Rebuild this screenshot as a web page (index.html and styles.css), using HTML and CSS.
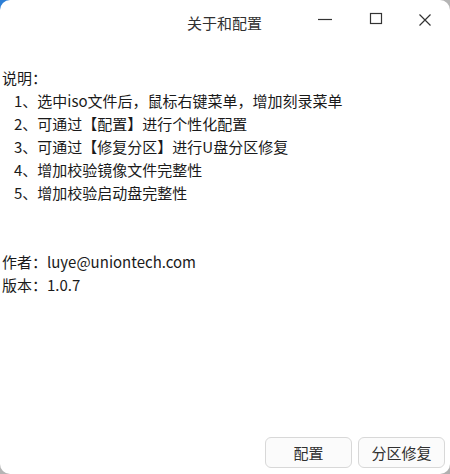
FILE: index.html
```html
<!DOCTYPE html>
<html lang="zh-CN">
<head>
<meta charset="utf-8">
<title>关于和配置</title>
<link rel="stylesheet" href="styles.css">
</head>
<body>
<div class="window">
  <div class="titlebar">
    <div class="title">关于和配置</div>
    <div class="controls">
      <svg class="ctl ctl-min" width="16" height="16" viewBox="0 0 16 16"><path d="M1 8.5H15" stroke="#333" stroke-width="1.2"/></svg>
      <svg class="ctl ctl-max" width="16" height="16" viewBox="0 0 16 16"><rect x="2.5" y="2.5" width="11" height="10" fill="none" stroke="#333" stroke-width="1.2"/></svg>
      <svg class="ctl ctl-close" width="16" height="16" viewBox="0 0 16 16"><path d="M2.5 2.5L13.5 13.5M13.5 2.5L2.5 13.5" stroke="#333" stroke-width="1.2"/></svg>
    </div>
  </div>
  <div class="content">
    <div class="line">说明：</div>
    <div class="line item">1、选中iso文件后，鼠标右键菜单，增加刻录菜单</div>
    <div class="line item">2、可通过【配置】进行个性化配置</div>
    <div class="line item">3、可通过【修复分区】进行U盘分区修复</div>
    <div class="line item">4、增加校验镜像文件完整性</div>
    <div class="line item">5、增加校验启动盘完整性</div>
    <div class="line blank"></div>
    <div class="line blank"></div>
    <div class="line">作者：luye@uniontech.com</div>
    <div class="line">版本：1.0.7</div>
  </div>
  <div class="footer">
    <button class="btn">配置</button>
    <button class="btn">分区修复</button>
  </div>
</div>
</body>
</html>
```
FILE: styles.css
```css
html, body {
  margin: 0;
  padding: 0;
  width: 450px;
  height: 474px;
  overflow: hidden;
}
body {
  background: linear-gradient(135deg, #2d7fd6 0, #2d7fd6 3%, #b8b8b8 10%, #b0b0b0 100%);
  font-family: "Noto Sans CJK SC", "Noto Sans", sans-serif;
}
.window {
  width: 450px;
  height: 474px;
  background: #ffffff;
  border-radius: 10px;
  display: flex;
  flex-direction: column;
  box-sizing: border-box;
}
.titlebar {
  height: 44px;
  position: relative;
  display: flex;
  align-items: center;
  justify-content: center;
  flex: none;
}
.title {
  font-size: 15px;
  color: #303030;
  margin-left: -1px;
}
.controls {
  position: absolute;
  top: 0;
  right: 0;
  height: 40px;
  display: flex;
  align-items: center;
}
.ctl { display: block; }
.ctl-min { margin-right: 35px; margin-top: -3px; }
.ctl-max { margin-right: 33px; margin-top: -3px; }
.ctl-close { margin-right: 17px; margin-top: -1px; }
.content {
  padding: 22px 0 0 2px;
  font-size: 15px;
  line-height: 23px;
  color: #1a1a1a;
  flex: 1;
}
.line { height: 23px; white-space: nowrap; }
.item { padding-left: 12px; }
.footer {
  display: flex;
  justify-content: flex-end;
  gap: 6px;
  padding: 0 5px 6px 0;
  flex: none;
}
.btn {
  width: 87px;
  height: 31px;
  border: 1px solid #d8d8d8;
  border-radius: 6px;
  background: #fbfbfb;
  font-family: "Noto Sans CJK SC", "Noto Sans", sans-serif;
  font-size: 15px;
  color: #303030;
  padding: 0;
}
```
